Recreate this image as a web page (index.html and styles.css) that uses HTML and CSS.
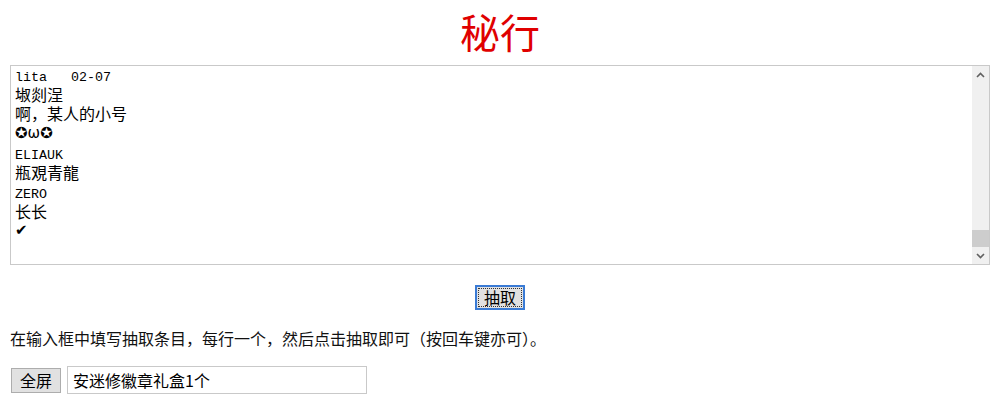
FILE: index.html
```html
<!DOCTYPE html>
<html lang="zh">
<head>
<meta charset="utf-8">
<title>秘行</title>
<link rel="stylesheet" href="styles.css">
</head>
<body>
<div class="page">
  <h1 class="title">秘行</h1>
  <div class="listbox">
    <div class="list">
      <div class="line"><span class="asc">lita   02-07</span></div>
      <div class="line">埱剡浧</div>
      <div class="line">啊，某人的小号</div>
      <div class="line sym">✪ω✪</div>
      <div class="line"><span class="asc">ELIAUK</span></div>
      <div class="line">瓶覌青龍</div>
      <div class="line"><span class="asc">ZERO</span></div>
      <div class="line">长长</div>
      <div class="line sym">✔</div>
    </div>
    <div class="scrollbar">
      <div class="arrow up"><svg width="9" height="6" viewBox="0 0 9 6"><path d="M1 5 L4.5 1.5 L8 5" fill="none" stroke="#606060" stroke-width="1.6"/></svg></div>
      <div class="track"><div class="thumb"></div></div>
      <div class="arrow down"><svg width="9" height="6" viewBox="0 0 9 6"><path d="M1 1 L4.5 4.5 L8 1" fill="none" stroke="#606060" stroke-width="1.6"/></svg></div>
    </div>
  </div>
  <div class="actions">
    <button class="btn btn-draw" type="button">抽取</button>
  </div>
  <p class="hint">在输入框中填写抽取条目，每行一个，然后点击抽取即可（按回车键亦可）。</p>
  <div class="bottom">
    <button class="btn btn-full" type="button">全屏</button>
    <input class="prize" type="text" value="安迷修徽章礼盒1个">
  </div>
</div>
</body>
</html>
```
FILE: styles.css
```css
html, body {
  margin: 0;
  padding: 0;
  background: #fff;
}
body {
  font-family: "Noto Sans CJK SC", "Liberation Sans", sans-serif;
  color: #000;
}
.page {
  padding: 0 16px 0 10px;
}
.title {
  margin: 0;
  padding-top: 7px;
  height: 65px;
  box-sizing: border-box;
  text-align: center;
  font-size: 40px;
  line-height: 48px;
  font-weight: normal;
  color: #e00000;
}
.listbox {
  display: flex;
  width: 980px;
  height: 200px;
  box-sizing: border-box;
  border: 1px solid #c9c9c9;
  background: #fff;
}
.list {
  flex: 1;
  padding: 0 4px;
  font-family: "Noto Sans CJK SC", sans-serif;
  font-size: 16px;
  line-height: 16px;
  color: #000;
  overflow: hidden;
}
.line {
  height: 19.5px;
  white-space: pre;
}
.asc {
  font-family: "Liberation Mono", monospace;
  font-size: 13.33px;
}
.sym {
  font-family: "DejaVu Sans", sans-serif;
  font-size: 15px;
}
.scrollbar {
  width: 17px;
  background: #f0f0f0;
  display: flex;
  flex-direction: column;
}
.arrow {
  height: 17px;
  display: flex;
  align-items: center;
  justify-content: center;
}
.track {
  flex: 1;
  display: flex;
  flex-direction: column;
  justify-content: flex-end;
}
.thumb {
  height: 17px;
  background: #cdcdcd;
}
.actions {
  display: flex;
  justify-content: center;
  padding-top: 20px;
  width: 980px;
}
.btn {
  font-family: "Noto Sans CJK SC", sans-serif;
  font-size: 16px;
  line-height: 19px;
  color: #000;
  background: #e1e1e1;
  border: 1px solid #adadad;
  padding: 2px 8px;
  margin: 0;
  cursor: pointer;
}
.btn-draw {
  border: 2px solid #3a7bd5;
  padding: 1px 7px;
  height: 25px;
  outline: 1px dotted #333;
  outline-offset: -4px;
}
.hint {
  margin: 0;
  padding-top: 16px;
  font-size: 16px;
  line-height: 24px;
  color: #111;
}
.bottom {
  display: flex;
  align-items: center;
  gap: 6px;
  margin-top: 16px;
  padding-left: 1px;
}
.btn-full {
  height: 25px;
  padding: 1px 8px;
}
.prize {
  width: 300px;
  height: 28px;
  box-sizing: border-box;
  border: 1px solid #c9c9c9;
  padding: 0 5px;
  font-family: "Noto Sans CJK SC", sans-serif;
  font-size: 16px;
  color: #000;
  margin: 0;
}
```
